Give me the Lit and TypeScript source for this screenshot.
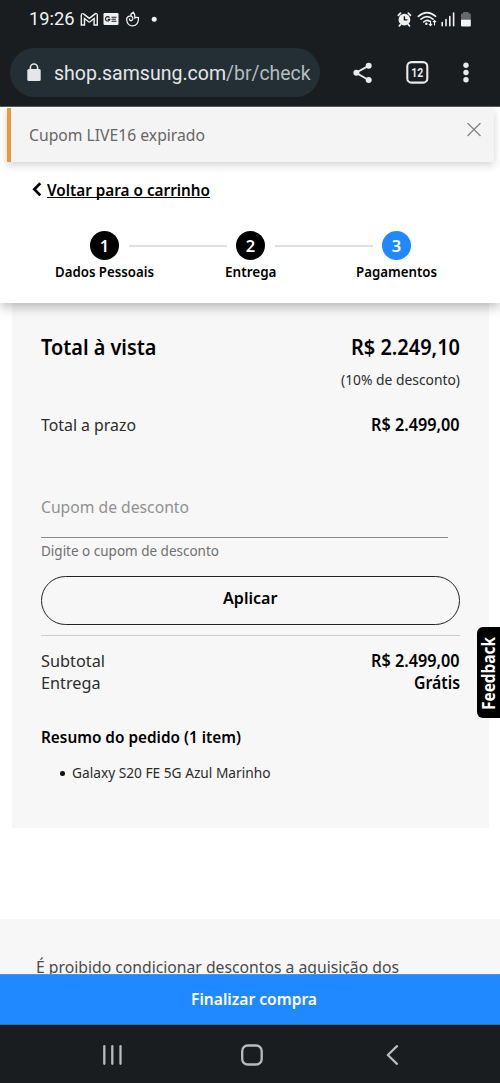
import { LitElement, html, css } from "lit";
import { customElement, property, query } from "lit/decorators.js";

/** Single-line label whose glyphs are condensed or widened to an exact width. */
@customElement("fit-text")
class FitText extends LitElement {
  @property({ type: Number }) w = 100;
  @query(".t") t!: HTMLElement;
  static styles = css`
    :host { display: block; flex: none; white-space: nowrap; }
    .t { display: inline-block; transform-origin: 0 50%; vertical-align: top; }
  `;
  render() {
    return html`<span class="t"><slot></slot></span>`;
  }
  firstUpdated() {
    const natural = this.t.getBoundingClientRect().width;
    this.style.width = `${this.w}px`;
    if (natural > 0) this.t.style.transform = `scaleX(${this.w / natural})`;
  }
}

@customElement("phone-header")
class PhoneHeader extends LitElement {
  static styles = css`
    :host { display: block; height: 107px; background: #191d20; border-bottom: 1px solid #53585c; box-sizing: border-box; font-family: Roboto, sans-serif; color: #f2f2f2; }
    .status { display: flex; height: 38px; padding: 0 22px 0 29px; justify-content: space-between; box-sizing: border-box; }
    .left { display: flex; }
    .time { font-size: 18.3px; line-height: 38px; }
    svg { display: block; flex: none; }
    .bar { display: flex; height: 49px; margin-top: 10px; padding-left: 10px; }
    .pill { display: flex; width: 310px; height: 49px; border-radius: 25px; background: #232f35; flex: none; box-sizing: border-box; padding-left: 16px; }
    .url { font-size: 20px; line-height: 50px; color: #e3e7e9; }
    .path { color: #b4bdc1; }
    .lock { margin-right: 12px; }
    .n { font: 700 12.5px Roboto, sans-serif; }
  `;
  render() {
    return html`
      <div class="status">
        <div class="left">
          <fit-text class="time" w="45.5">19:26</fit-text>
          <svg width="90" height="38" viewBox="74.5 0 90 38" fill="none">
            <path d="M82.4 23.4V15.2L88.8 20.3L95.2 15.2V23.4" stroke="#f0f0f0" stroke-width="4.6" stroke-linejoin="round" stroke-linecap="square" />
            <path d="M82.4 24.2V15.4L88.8 20.5L95.2 15.4V24.2" stroke="#191d20" stroke-width="1.7" />
            <rect x="103" y="13" width="15" height="12" rx="1.2" fill="#f0f0f0" />
            <path d="M109 17.6a2.2 2.2 0 1 0 .3 1.8h-2M111 17.2h5M111 19.2h4.4M111 21.2h5" stroke="#191d20" stroke-width="1.15" />
            <path d="M132.6 12.2C130.6 13.4 129.8 14.8 130.6 16.2C127.600 15.6 125.9 17.6 126.2 20C126.5 23.5 129 25.9 132.2 25.9C136 25.9 138.3 22.8 138 17.6C136.3 17 135 17.4 134.2 18C134.6 15.5 134.3 13.6 132.6 12.2M130.6 16.2C132.6 17 132.9 19.4 131.4 20.4C130.2 21.1 128.8 20.4 129 19" stroke="#f0f0f0" stroke-width="1.3" stroke-linecap="round" stroke-linejoin="round" />
            <circle cx="153.7" cy="19.2" r="2.5" fill="#f0f0f0" />
          </svg>
        </div>
        <svg width="82" height="38" viewBox="396 0 82 38" fill="none" stroke="#f0f0f0">
          <circle cx="404.4" cy="19.7" r="5.9" fill="#f0f0f0" stroke="none" />
          <path d="M398.3 15.3l2.2-2.1M410.5 15.3l-2.2-2.1M400.5 24.6l-1.2 1.3M408.3 24.6l1.2 1.3" stroke-width="1.7" stroke-linecap="round" />
          <path d="M404.4 16.2v3.7h3" stroke="#191d20" stroke-width="1.4" />
          <path d="M418.3 16.3Q427 8.8 435.7 16.3M421 19.2Q427 14.2 433 19.2M423.6 22Q427 19.2 429.4 21.2" stroke-width="1.6" stroke-linecap="round" />
          <circle cx="426.3" cy="23.7" r="1.3" fill="#f0f0f0" stroke="none" />
          <path d="M430.5 20.5v5M428.9 23.9l1.6 1.7 1.6-1.7M434.5 25.5v-5M432.9 22.2l1.6-1.7 1.6 1.7" stroke-width="1.1" />
          <path d="M442.2 22.5v3.2M446 19.5v6.2M449.8 16.5v9.2M453.6 13v12.7" stroke-width="1.6" stroke-linecap="round" />
          <path d="M461 20v-5.5q0-1 1-1h1.2V12h5.4v1.5h1.2q1 0 1 1V20z" fill="#66696b" stroke="none" />
          <path d="M461 19.8h9.8v5.4q0 1.4-1.4 1.4h-7q-1.4 0-1.4-1.4z" fill="#f4f4f4" stroke="none" />
        </svg>
      </div>
      <div class="bar">
        <div class="pill">
          <svg class="lock" width="16" height="49" viewBox="26 48 16 49" fill="none">
            <rect x="27.3" y="69" width="13.4" height="12" rx="1.6" fill="#e3e7e9" />
            <path d="M30.4 70v-2.4a3.6 3.6 0 0 1 7.2 0V70" stroke="#e3e7e9" stroke-width="1.6" />
          </svg>
          <fit-text class="url" w="172">shop.samsung.com</fit-text>
          <fit-text class="url path" w="84.5">/br/check</fit-text>
        </div>
        <svg width="180" height="49" viewBox="320 48 180 49" fill="#e8eaeb">
          <path d="M369 65.6L356 72.7l13 7.5" fill="none" stroke="#e8eaeb" stroke-width="1.9" />
          <circle cx="368.7" cy="65.7" r="3" /><circle cx="356.4" cy="72.7" r="3" /><circle cx="368.7" cy="80" r="3" />
          <rect x="407.3" y="62.1" width="20" height="20.5" rx="4.2" fill="none" stroke="#e8eaeb" stroke-width="2.1" />
          <text class="n" x="417.3" y="77" text-anchor="middle" textLength="12" lengthAdjust="spacingAndGlyphs">12</text>
          <circle cx="466" cy="65.3" r="2.7" /><circle cx="466" cy="72.5" r="2.7" /><circle cx="466" cy="79.8" r="2.7" />
        </svg>
      </div>
    `;
  }
}

@customElement("app-root")
class AppRoot extends LitElement {
  static styles = css`
    :host { display: block; width: 500px; height: 1083px; overflow: hidden; background: #fff; font-family: "Noto Sans", "Open Sans", sans-serif; color: #000; font-size: 17px; line-height: 24px; }
    .screen { display: flex; flex-direction: column; height: 1083px; }
    phone-header { flex: none; }
    svg { display: block; flex: none; }
    .page { flex: none; height: 867px; overflow: hidden; position: relative; }
    .top { height: 196px; box-sizing: border-box; background: #fff; padding-top: 1px; position: relative; box-shadow: 0 3px 12px rgba(0,0,0,.3); }
    .alert { display: flex; justify-content: space-between; box-sizing: border-box; height: 54px; margin: 0 6px 0 7px; padding: 15px 12px 0 18px; border-left: 4px solid #e49c36; background: #f4f4f4; box-shadow: 0 3px 8px rgba(0,0,0,.18); }
    .alert fit-text { color: #666; }
    .back { display: flex; margin: 16px 0 0 32px; height: 24px; }
    .link { font-weight: 600; font-size: 16.5px; border-bottom: 1.3px solid #000; height: 20px; box-sizing: border-box; margin-left: 5px; }
    .dots { display: flex; align-items: center; margin: 29px 0 0 90px; }
    .dot { flex: none; width: 29px; height: 29px; border-radius: 50%; background: #000; color: #fff; font-weight: 600; font-size: 16.5px; line-height: 29px; text-align: center; }
    .dot.on { background: #2189ff; }
    .rail { flex: none; width: 98px; height: 2px; margin: 1px 9.5px 0; background: #e0e0e0; }
    .names { display: grid; grid-template-columns: repeat(3, 146px); justify-items: center; margin: 3px 0 0 31.5px; font-weight: 600; font-size: 14px; line-height: 18px; }
    .card { background: #f7f7f7; width: 477px; height: 525px; margin-left: 12px; padding: 1px 29.5px 0 29px; box-sizing: border-box; }
    .row { display: flex; justify-content: space-between; }
    .b { font-weight: 600; }
    .light { color: #2c2c2c; }
    .total { font-size: 22px; line-height: 30px; font-weight: 600; margin-top: 27px; height: 30px; }
    .off { justify-content: flex-end; font-size: 14.8px; margin-top: 6px; }
    .term { margin-top: 22px; height: 24px; }
    .field { margin-top: 58px; height: 43px; width: 407px; border-bottom: 1px solid #8b8b8b; box-sizing: border-box; color: #919191; }
    .hint { font-size: 14.8px; line-height: 24px; color: #707070; }
    .apply { display: flex; justify-content: center; height: 49px; margin: 14px -.5px 0 0; border: 1.3px solid #222; border-radius: 25px; box-sizing: border-box; font-weight: 600; font-size: 16.5px; padding-top: 9px; }
    .sum { margin-top: 10px; border-top: 1px solid #ccc; padding-top: 14px; line-height: 22px; }
    .sum .row { height: 22px; }
    .resumo { font-size: 16.5px; font-weight: 600; margin-top: 31px; }
    .item { display: flex; align-items: center; gap: 7.5px; margin: 11px 0 0 19px; font-size: 14.8px; }
    .item i { width: 4.5px; height: 4.5px; border-radius: 50%; background: #111; margin-top: 3px; }
    .legal { margin-top: 91px; background: #f7f7f7; padding: 36px 0 40px 36px; color: #4a4a4a; }
    .feedback { position: absolute; right: 0; top: 520px; width: 23px; height: 91px; border-radius: 6px 0 0 6px; background: #000; }
    .fb { font: 700 17.5px "Noto Sans", sans-serif; fill: #fff; }
    .buy { flex: none; height: 51px; background: #2189ff; border-top: 1px solid #4f92dc; border-bottom: 1px solid #2d6fae; box-sizing: border-box; color: #fff; display: flex; justify-content: center; padding: 12px 0 0 7px; font-weight: 600; font-size: 16.5px; }
    .nav { flex: none; height: 58px; background: #191d20; }
  `;
  render() {
    const steps: [string, number][] = [["Dados Pessoais", 99], ["Entrega", 51.5], ["Pagamentos", 81]];
    return html`
      <div class="screen">
        <phone-header></phone-header>
        <div class="page">
          <div class="top">
            <div class="alert">
              <fit-text w="176">Cupom LIVE16 expirado</fit-text>
              <svg width="15" height="15" viewBox="0 0 15 15"><path d="M.5 0L13.5 13M13.5 0L.5 13" stroke="#8c8c8c" stroke-width="1.5" fill="none" /></svg>
            </div>
            <div class="back">
              <svg width="10" height="24" viewBox="0 0 10 24"><path d="M8.3 5.2L2.3 11.3L8.3 17.4" fill="none" stroke="#000" stroke-width="2.7" /></svg>
              <fit-text class="link" w="163">Voltar para o carrinho</fit-text>
            </div>
            <div class="dots">
              ${steps.map((_, i) => html`${i ? html`<div class="rail"></div>` : ""}<div class="dot ${i === 2 ? "on" : ""}">${i + 1}</div>`)}
            </div>
            <div class="names">${steps.map(([name, w]) => html`<fit-text w=${w}>${name}</fit-text>`)}</div>
          </div>
          <div class="card">
            <div class="row total"><fit-text w="115.5">Total à vista</fit-text><fit-text w="109">R$ 2.249,10</fit-text></div>
            <div class="row off light"><fit-text w="119">(10% de desconto)</fit-text></div>
            <div class="row term"><fit-text class="light" w="95">Total a prazo</fit-text><fit-text class="b" w="88.5">R$ 2.499,00</fit-text></div>
            <div class="field"><fit-text w="148">Cupom de desconto</fit-text></div>
            <fit-text class="hint" w="178">Digite o cupom de desconto</fit-text>
            <div class="apply"><fit-text w="54.5">Aplicar</fit-text></div>
            <div class="sum">
              <div class="row"><fit-text class="light" w="64">Subtotal</fit-text><fit-text class="b" w="88.5">R$ 2.499,00</fit-text></div>
              <div class="row"><fit-text class="light" w="59.5">Entrega</fit-text><fit-text class="b" w="46">Grátis</fit-text></div>
            </div>
            <fit-text class="resumo" w="200">Resumo do pedido (1 item)</fit-text>
            <div class="item light"><i></i><fit-text w="198.5">Galaxy S20 FE 5G Azul Marinho</fit-text></div>
          </div>
          <div class="legal"><fit-text w="363">É proibido condicionar descontos a aquisição dos</fit-text></div>
          <svg class="feedback" viewBox="0 0 23 91"><text class="fb" transform="translate(18.2 83) rotate(-90)" textLength="73" lengthAdjust="spacingAndGlyphs">Feedback</text></svg>
        </div>
        <div class="buy"><fit-text w="126">Finalizar compra</fit-text></div>
        <svg class="nav" width="500" height="58" viewBox="0 1025 500 58" fill="none" stroke="#b9bbbc" stroke-width="2.3" stroke-linecap="round" stroke-linejoin="round">
          <path d="M104.3 1046.2v17.6M112.3 1046.2v17.6M120.5 1046.2v17.6" />
          <rect x="242.2" y="1045.5" width="19.5" height="19" rx="5.5" />
          <path d="M397 1046.2L387.8 1055L397 1063.8" />
        </svg>
      </div>
    `;
  }
}
